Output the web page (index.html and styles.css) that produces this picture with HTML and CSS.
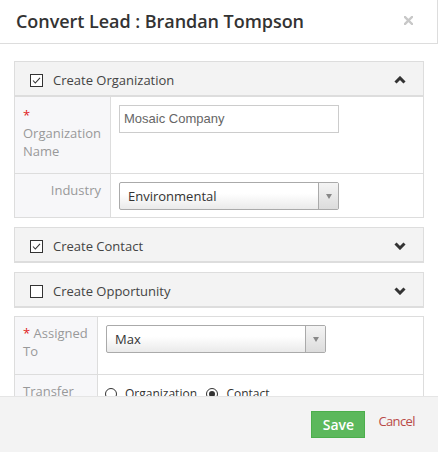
FILE: index.html
```html
<!DOCTYPE html>
<html>
<head>
<meta charset="utf-8">
<link rel="stylesheet" href="styles.css">
</head>
<body>
<div class="modal">
  <div class="modal-header">
    <h4 class="title">Convert Lead : Brandan Tompson</h4>
    <svg class="close" width="9" height="9" viewBox="0 0 9 9"><path d="M1 1L8 8M8 1L1 8" stroke="#c8c8c8" stroke-width="2.4" stroke-linecap="square"/></svg>
  </div>
  <div class="modal-body">
    <div class="panel">
      <div class="panel-heading">
        <span class="check"><svg width="13" height="13" viewBox="0 0 13 13"><rect x="0.5" y="0.5" width="12" height="12" fill="#fff" stroke="#333"/><path d="M3 6.5L5.3 9L10 3.8" fill="none" stroke="#333" stroke-width="1.1"/></svg></span>
        <span class="ptitle">Create Organization</span>
        <svg class="chev" width="12" height="8" viewBox="0 0 12 8"><path d="M1.5 6.5L6 2L10.5 6.5" fill="none" stroke="#333" stroke-width="3"/></svg>
      </div>
      <table class="form">
        <tr class="row-org">
          <td class="label left org-label"><span class="req">*</span><br>Organization Name</td>
          <td class="value"><div class="input">Mosaic Company</div></td>
        </tr>
        <tr class="row-ind">
          <td class="label right">Industry</td>
          <td class="value"><div class="select"><span class="sel-text">Environmental</span><span class="sel-arrow"><i></i></span></div></td>
        </tr>
      </table>
    </div>
    <div class="panel">
      <div class="panel-heading last">
        <span class="check"><svg width="13" height="13" viewBox="0 0 13 13"><rect x="0.5" y="0.5" width="12" height="12" fill="#fff" stroke="#333"/><path d="M3 6.5L5.3 9L10 3.8" fill="none" stroke="#333" stroke-width="1.1"/></svg></span>
        <span class="ptitle">Create Contact</span>
        <svg class="chev" width="12" height="8" viewBox="0 0 12 8"><path d="M1.5 1.5L6 6L10.5 1.5" fill="none" stroke="#333" stroke-width="3"/></svg>
      </div>
    </div>
    <div class="panel">
      <div class="panel-heading last">
        <span class="check"><svg width="13" height="13" viewBox="0 0 13 13"><rect x="0.5" y="0.5" width="12" height="12" fill="#fff" stroke="#333"/></svg></span>
        <span class="ptitle">Create Opportunity</span>
        <svg class="chev" width="12" height="8" viewBox="0 0 12 8"><path d="M1.5 1.5L6 6L10.5 1.5" fill="none" stroke="#333" stroke-width="3"/></svg>
      </div>
    </div>
    <table class="form standalone">
      <tr class="row-assign">
        <td class="label left assign-label"><span class="req">*</span> Assigned To</td>
        <td class="value"><div class="select"><span class="sel-text">Max</span><span class="sel-arrow"><i></i></span></div></td>
      </tr>
      <tr class="row-transfer">
        <td class="label left">Transfer</td>
        <td class="value radios">
          <span class="radio"></span><span class="rlabel">Organization</span>
          <span class="radio on"></span><span class="rlabel">Contact</span>
        </td>
      </tr>
    </table>
  </div>
  <div class="modal-footer">
    <button class="btn-save">Save</button>
    <a class="cancel">Cancel</a>
  </div>
</div>
</body>
</html>
```
FILE: styles.css
```css
html, body {
  margin: 0;
  padding: 0;
  background: #fff;
}
body {
  font-family: "Open Sans", "Liberation Sans", sans-serif;
  font-size: 13px;
  color: #333;
}
.modal {
  width: 438px;
  height: 452px;
  display: flex;
  flex-direction: column;
  background: #fff;
}
.modal-header {
  flex-shrink: 0;
  height: 43px;
  border-bottom: 1px solid #ddd;
  border-right: 1px solid #ddd;
  display: flex;
  align-items: flex-start;
  justify-content: space-between;
  padding: 0 24px 0 16px;
  box-sizing: content-box;
}
.title {
  margin: 0;
  padding-top: 9px;
  font-size: 18px;
  line-height: 24px;
  font-weight: 600;
  color: #333;
  letter-spacing: -0.05px;
}
.close {
  margin-top: 16px;
}
.modal-body {
  flex: 1;
  overflow: hidden;
  padding: 17px 14px 0 14px;
}
.panel {
  border: 1px solid #ddd;
  margin-bottom: 9px;
}
.panel-heading {
  background: #f3f3f3;
  box-sizing: border-box;
  height: 34px;
  border-bottom: 1px solid #ddd;
  display: flex;
  align-items: center;
  padding: 3px 17px 0 15px;
}
.check {
  width: 13px;
  height: 13px;
  display: flex;
  margin-right: 10px;
}
.ptitle {
  flex: 1;
  font-size: 13px;
  color: #444;
}
.chev {
  display: block;
}
table.form {
  width: 100%;
  border-collapse: collapse;
}
table.form td {
  border-top: 1px solid #ddd;
  vertical-align: top;
}
table.form td.label {
  background: #f7f7f9;
  color: #999;
  font-size: 13px;
  line-height: 18px;
  border-right: 1px solid #ddd;
}
.row-org td.label {
  width: 79px;
  padding: 9px 8px 13px 8px;
}
.label.right {
  text-align: right;
  padding: 7px 9px 7px 8px;
}
.req {
  color: #e02020;
}
td.value {
  padding: 8px 8px;
}
.row-ind td.value {
  padding: 8px 8px 7px 8px;
}
.input {
  width: 220px;
  height: 28px;
  box-sizing: border-box;
  border: 1px solid #ccc;
  font-family: "Liberation Sans", Arial, sans-serif;
  font-size: 13px;
  color: #666;
  line-height: 26px;
  padding-left: 4px;
}
.select {
  width: 220px;
  height: 28px;
  box-sizing: border-box;
  border: 1px solid #aaa;
  border-radius: 2px;
  background: linear-gradient(#fff 0%, #fff 40%, #eaeaea 100%);
  display: flex;
  align-items: stretch;
}
.sel-text {
  flex: 1;
  padding-left: 8px;
  line-height: 26px;
  font-size: 13px;
  color: #333;
}
.sel-arrow {
  width: 19px;
  border-left: 1px solid #aaa;
  background: linear-gradient(#f4f4f4, #dcdcdc);
  display: flex;
  align-items: center;
  justify-content: center;
}
.sel-arrow i {
  width: 0;
  height: 0;
  border-left: 3.5px solid transparent;
  border-right: 3.5px solid transparent;
  border-top: 5px solid #888;
}
.standalone {
  border: 1px solid #ddd;
  margin-top: -1px;
}
.standalone td.label {
  width: 66px;
}
.row-assign td.label {
  padding: 7px 8px 14px 8px;
}
.row-assign td.value {
  padding: 8px 8px;
}
.row-transfer td.label {
  padding: 7px 8px;
}
td.value.radios {
  padding: 9px 7px 4px 7px;
  line-height: 18px;
}
.radio {
  width: 12px;
  height: 12px;
  border: 1px solid #333;
  border-radius: 50%;
  box-sizing: border-box;
  display: inline-block;
  margin-right: 8px;
  position: relative;
  top: 2px;
}
.radio.on::after {
  content: "";
  position: absolute;
  left: 2px;
  top: 2px;
  width: 6px;
  height: 6px;
  border-radius: 50%;
  background: #333;
}
.rlabel {
  margin-right: 6px;
  color: #333;
  font-size: 12px;
}
.modal-footer {
  flex-shrink: 0;
  height: 55px;
  border-top: 1px solid #e5e5e5;
  background: #f3f3f3;
  display: flex;
  align-items: flex-start;
  justify-content: flex-end;
  padding-right: 23px;
}
.btn-save {
  margin-top: 14px;
  width: 54px;
  height: 27px;
  background: #5cb85c;
  border: 1px solid #4cae4c;
  color: #fff;
  font-family: "Open Sans", sans-serif;
  font-weight: 600;
  font-size: 14px;
  padding: 0;
  line-height: 24px;
}
.cancel {
  margin-left: 13px;
  margin-top: 15px;
  color: #b94a48;
  font-size: 13px;
  line-height: 18px;
  letter-spacing: -0.6px;
}
```
